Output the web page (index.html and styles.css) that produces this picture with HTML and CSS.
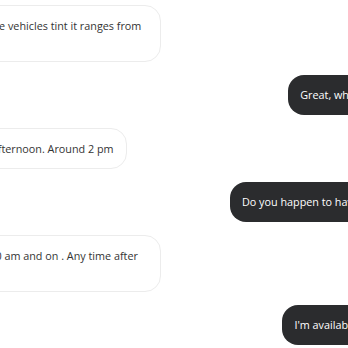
FILE: index.html
```html
<!DOCTYPE html>
<html lang="en">
<head>
<meta charset="utf-8">
<title>Chat</title>
<link rel="stylesheet" href="styles.css">
</head>
<body>
<div class="chat">
  <div class="msg msg-in">Now, the vehicles tint it ranges from $250.</div>
  <div class="msg msg-out">Great, when are you available?</div>
  <div class="msg msg-in">In the afternoon. Around 2 pm</div>
  <div class="msg msg-out">Do you happen to have an opening today?</div>
  <div class="msg msg-in">From 10 am and on . Any time after noon.</div>
  <div class="msg msg-out">I'm available tomorrow at 3 pm.</div>
</div>
</body>
</html>
```
FILE: styles.css
```css
html, body {
  margin: 0;
  padding: 0;
  background: #ffffff;
  overflow: hidden;
}

body {
  font-family: "Open Sans", "Noto Sans", sans-serif;
  font-size: 10.8px;
  line-height: 16px;
}

.chat {
  display: flex;
  flex-direction: column;
  gap: 13px;
  width: 519px;
  margin-left: -53px;
  padding-top: 5px;
}

.msg {
  box-sizing: border-box;
  border-radius: 16px;
}

.msg-in {
  align-self: flex-start;
  max-width: 213.5px;
  padding: 11.5px 12px;
  background: #ffffff;
  border: 1px solid #ececec;
  color: #333333;
}

.msg-out {
  align-self: flex-end;
  white-space: nowrap;
  padding: 12px;
  background: #2b2c2e;
  color: #ffffff;
}
```
